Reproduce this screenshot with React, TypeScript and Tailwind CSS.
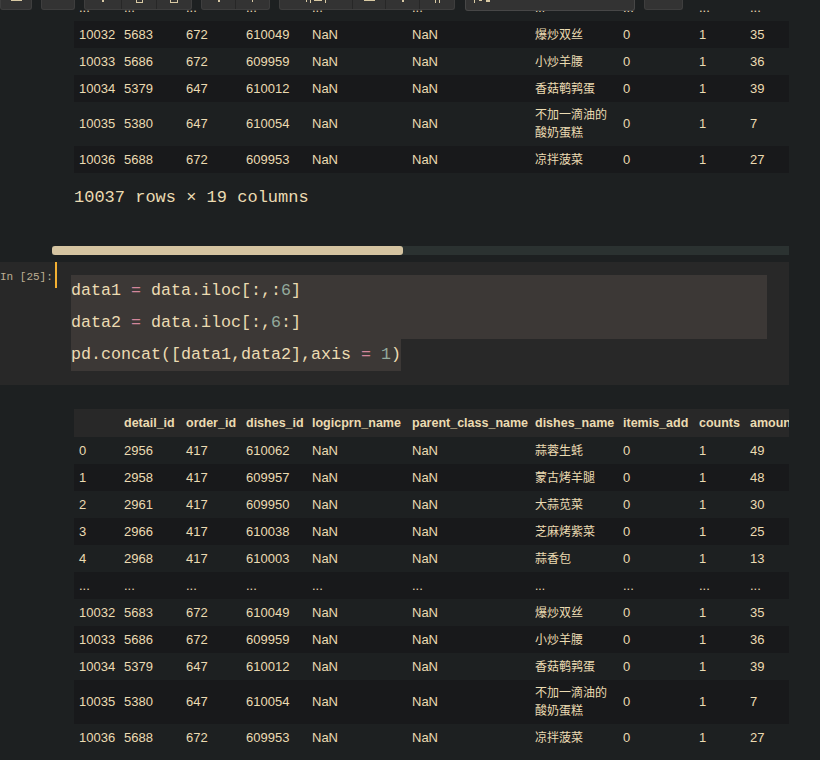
import React from 'react';

const widthClasses = [
  'w-[45px]', 'w-[62px]', 'w-[60px]', 'w-[66px]', 'w-[100px]', 'w-[123px]',
  'w-[88px]', 'w-[76px]', 'w-[51px]', 'w-[64px]',
];

const headers = [
  '', 'detail_id', 'order_id', 'dishes_id', 'logicprn_name', 'parent_class_name',
  'dishes_name', 'itemis_add', 'counts', 'amounts',
];

const dots = Array(10).fill('...');

const headRows: string[][] = [
  ['0', '2956', '417', '610062', 'NaN', 'NaN', '蒜蓉生蚝', '0', '1', '49'],
  ['1', '2958', '417', '609957', 'NaN', 'NaN', '蒙古烤羊腿', '0', '1', '48'],
  ['2', '2961', '417', '609950', 'NaN', 'NaN', '大蒜苋菜', '0', '1', '30'],
  ['3', '2966', '417', '610038', 'NaN', 'NaN', '芝麻烤紫菜', '0', '1', '25'],
  ['4', '2968', '417', '610003', 'NaN', 'NaN', '蒜香包', '0', '1', '13'],
];

const tailRows: string[][] = [
  ['10032', '5683', '672', '610049', 'NaN', 'NaN', '爆炒双丝', '0', '1', '35'],
  ['10033', '5686', '672', '609959', 'NaN', 'NaN', '小炒羊腰', '0', '1', '36'],
  ['10034', '5379', '647', '610012', 'NaN', 'NaN', '香菇鹌鹑蛋', '0', '1', '39'],
  ['10035', '5380', '647', '610054', 'NaN', 'NaN', '不加一滴油的酸奶蛋糕', '0', '1', '7'],
  ['10036', '5688', '672', '609953', 'NaN', 'NaN', '凉拌菠菜', '0', '1', '27'],
];

const DataTable: React.FC<{ rows: string[][]; showHeader?: boolean }> = ({ rows, showHeader }) => (
  <div className="w-[715px] overflow-hidden">
    <table className="w-[735px] table-fixed border-collapse text-left text-[13px] leading-[18px] text-[#ebdbb2]">
      <colgroup>
        {widthClasses.map((w, i) => (
          <col key={i} className={w} />
        ))}
      </colgroup>
      {showHeader && (
        <thead>
          <tr className="h-[28px] bg-[#282828]">
            {headers.map((h, i) => (
              <th key={i} className="whitespace-nowrap px-[5px] text-[12.5px] font-bold">
                {h}
              </th>
            ))}
          </tr>
        </thead>
      )}
      <tbody>
        {rows.map((r, ri) => (
          <tr key={ri} className={ri % 2 === 1 ? 'h-[27px] bg-[#18191b]' : 'h-[27px]'}>
            {r.map((c, ci) => (
              <td
                key={ci}
                className={
                  ci === 6
                    ? 'px-[5px] py-1 align-middle text-[12px] leading-[18px]'
                    : 'whitespace-nowrap px-[5px] py-1 align-middle'
                }
              >
                {c}
              </td>
            ))}
          </tr>
        ))}
      </tbody>
    </table>
  </div>
);

// tiny glyph stubs: only the bottom edge of the toolbar icons is on screen
const Stub: React.FC<{ w?: string; h?: string }> = ({ w = 'w-[2px]', h = 'h-[2px]' }) => (
  <div className={`${w} ${h} bg-[#d8c9a3]`} />
);

const Btn: React.FC<{ w: string; first?: boolean; children?: React.ReactNode }> = ({ w, first, children }) => (
  <div className={`flex h-full ${w} items-start justify-center gap-[3px] ${first ? '' : 'border-l border-[#272727]'}`}>
    {children}
  </div>
);

const Group: React.FC<{ children: React.ReactNode }> = ({ children }) => (
  <div className="flex h-[10px] overflow-hidden rounded-b-[3px] border border-t-0 border-[#3e3e3e] bg-[#333333]">
    {children}
  </div>
);

const Toolbar: React.FC = () => (
  <div className="absolute left-0 top-0 z-10 flex items-start gap-[9px]">
    <Group>
      <Btn w="w-[30px]" first>
        <Stub w="w-[11px]" h="h-[1px]" />
      </Btn>
    </Group>
    <Group>
      <Btn w="w-[32px]" first />
    </Group>
    <Group>
      <Btn w="w-[36px]" first>
        <Stub />
      </Btn>
      <Btn w="w-[35px]">
        <div className="h-[3px] w-[7px] border border-t-0 border-[#d8c9a3]" />
      </Btn>
      <Btn w="w-[35px]">
        <div className="h-[3px] w-[8px] border border-t-0 border-[#d8c9a3]" />
      </Btn>
    </Group>
    <Group>
      <Btn w="w-[33px]" first>
        <Stub />
      </Btn>
      <Btn w="w-[34px]">
        <Stub w="w-[1px]" />
      </Btn>
    </Group>
    <Group>
      <Btn w="w-[72px]" first>
        <Stub w="w-[1px]" />
        <Stub w="w-[1px]" h="h-[3px]" />
        <Stub w="w-[8px]" h="h-[1px]" />
        <Stub w="w-[1px]" h="h-[3px]" />
      </Btn>
      <Btn w="w-[33px]">
        <Stub w="w-[11px]" h="h-[1px]" />
      </Btn>
      <Btn w="w-[34px]">
        <Stub />
      </Btn>
      <Btn w="w-[35px]">
        <Stub w="w-[1px]" h="h-[3px]" />
        <Stub w="w-[1px]" h="h-[3px]" />
      </Btn>
    </Group>
    <div className="ml-px flex h-[11px] w-[170px] items-start gap-[4px] rounded-b-[3px] border border-t-0 border-[#474747] bg-[#333333] pl-[8px]">
      <Stub w="w-[1px]" h="h-[3px]" />
      <Stub w="w-[3px]" h="h-[1px]" />
      <Stub w="w-[4px]" h="h-[2px]" />
    </div>
    <Group>
      <Btn w="w-[37px]" first />
    </Group>
  </div>
);

const Num: React.FC<{ children: React.ReactNode }> = ({ children }) => (
  <span className="text-[#93a99c]">{children}</span>
);
const Op: React.FC<{ children: React.ReactNode }> = ({ children }) => (
  <span className="text-[#d3869b]">{children}</span>
);

const InputCell: React.FC = () => (
  <div className="mt-[7px] flex h-[123px] w-[789px] bg-[#282828]">
    <div className="w-[55px] shrink-0 whitespace-nowrap pr-[3px] pt-[7px] text-right [font-family:'Liberation_Mono',monospace] text-[11px] leading-[16px] text-[#bdae93]">
      In [25]:
    </div>
    <div className="h-[26px] w-[2px] shrink-0 bg-[#f4b032]" />
    <div className="ml-[14px] w-[696px] pt-[13px] [font-family:'Liberation_Mono',monospace] text-[16.67px] leading-[32px] whitespace-pre text-[#ebdbb2]">
      <div className="bg-[#3c3836]">
        data1 <Op>=</Op> data.iloc[:,:<Num>6</Num>]
      </div>
      <div className="bg-[#3c3836]">
        data2 <Op>=</Op> data.iloc[:,<Num>6</Num>:]
      </div>
      <div>
        <span className="inline-block bg-[#3c3836]">
          pd.concat([data1,data2],axis <Op>=</Op> <Num>1</Num>)
        </span>
      </div>
    </div>
  </div>
);

export default function App() {
  return (
    <div className="relative h-[760px] w-[820px] overflow-hidden bg-[#1d2021] [font-family:'Liberation_Sans','Noto_Sans_CJK_SC',sans-serif]">
      <Toolbar />
      <div className="-mt-[6px] w-[789px]">
        <div className="pl-[74px]">
          <DataTable rows={[dots, ...tailRows]} />
          <div className="mt-[12px] pt-px [font-family:'Liberation_Mono',monospace] text-[17px] leading-[24px] text-[#ebdbb2]">
            10037 rows × 19 columns
          </div>
        </div>
        <div className="ml-[52px] mt-[36px] h-[9px] w-[737px] bg-[#2b3231]">
          <div className="h-full w-[351px] rounded-[3px] bg-[#d5c4a1]" />
        </div>
        <InputCell />
        <div className="mt-[24px] pl-[74px]">
          <DataTable rows={[...headRows, dots, ...tailRows]} showHeader />
        </div>
      </div>
    </div>
  );
}
